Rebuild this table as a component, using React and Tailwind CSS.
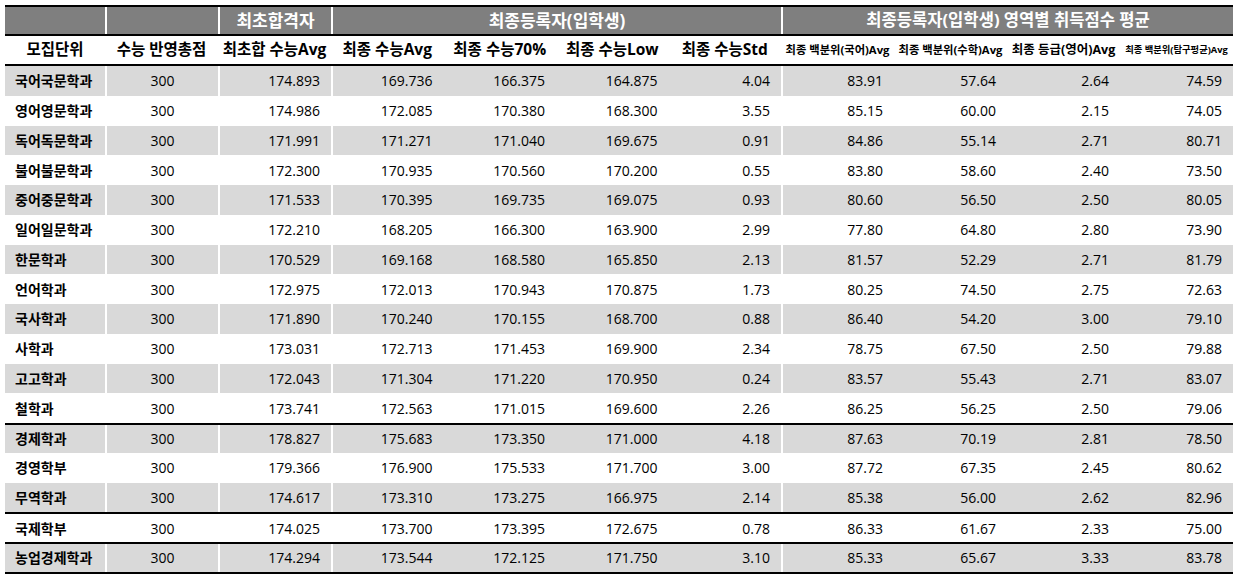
import React from "react";

const rows = [
  ["국어국문학과", "300", "174.893", "169.736", "166.375", "164.875", "4.04", "83.91", "57.64", "2.64", "74.59"],
  ["영어영문학과", "300", "174.986", "172.085", "170.380", "168.300", "3.55", "85.15", "60.00", "2.15", "74.05"],
  ["독어독문학과", "300", "171.991", "171.271", "171.040", "169.675", "0.91", "84.86", "55.14", "2.71", "80.71"],
  ["불어불문학과", "300", "172.300", "170.935", "170.560", "170.200", "0.55", "83.80", "58.60", "2.40", "73.50"],
  ["중어중문학과", "300", "171.533", "170.395", "169.735", "169.075", "0.93", "80.60", "56.50", "2.50", "80.05"],
  ["일어일문학과", "300", "172.210", "168.205", "166.300", "163.900", "2.99", "77.80", "64.80", "2.80", "73.90"],
  ["한문학과", "300", "170.529", "169.168", "168.580", "165.850", "2.13", "81.57", "52.29", "2.71", "81.79"],
  ["언어학과", "300", "172.975", "172.013", "170.943", "170.875", "1.73", "80.25", "74.50", "2.75", "72.63"],
  ["국사학과", "300", "171.890", "170.240", "170.155", "168.700", "0.88", "86.40", "54.20", "3.00", "79.10"],
  ["사학과", "300", "173.031", "172.713", "171.453", "169.900", "2.34", "78.75", "67.50", "2.50", "79.88"],
  ["고고학과", "300", "172.043", "171.304", "171.220", "170.950", "0.24", "83.57", "55.43", "2.71", "83.07"],
  ["철학과", "300", "173.741", "172.563", "171.015", "169.600", "2.26", "86.25", "56.25", "2.50", "79.06"],
  ["경제학과", "300", "178.827", "175.683", "173.350", "171.000", "4.18", "87.63", "70.19", "2.81", "78.50"],
  ["경영학부", "300", "179.366", "176.900", "175.533", "171.700", "3.00", "87.72", "67.35", "2.45", "80.62"],
  ["무역학과", "300", "174.617", "173.310", "173.275", "166.975", "2.14", "85.38", "56.00", "2.62", "82.96"],
  ["국제학부", "300", "174.025", "173.700", "173.395", "172.675", "0.78", "86.33", "61.67", "2.33", "75.00"],
  ["농업경제학과", "300", "174.294", "173.544", "172.125", "171.750", "3.10", "85.33", "65.67", "3.33", "83.78"],
];

const groupStart = [12, 15, 16];

const widths = [
  "w-[100px]",
  "w-[113px]",
  "w-[113px]",
  "w-[112.5px]",
  "w-[112.5px]",
  "w-[112.5px]",
  "w-[112.5px]",
  "w-[113px]",
  "w-[113px]",
  "w-[113px]",
  "w-[113px]",
];

const seps = ["", "border-l-2 border-white", "border-l-2 border-white", "border-l-2 border-white", "", "", "", "border-l-2 border-white", "", "", ""];

const headers = [
  { t: "모집단위", c: "text-[15.5px]" },
  { t: "수능 반영총점", c: "text-[15.5px]" },
  { t: "최초합 수능Avg", c: "text-[15.5px]" },
  { t: "최종 수능Avg", c: "text-[15.5px]" },
  { t: "최종 수능70%", c: "text-[15.5px]" },
  { t: "최종 수능Low", c: "text-[15.5px]" },
  { t: "최종 수능Std", c: "text-[15.5px]" },
  { t: "최종 백분위(국어)Avg", c: "text-[11.3px]" },
  { t: "최종 백분위(수학)Avg", c: "text-[11.3px]" },
  { t: "최종 등급(영어)Avg", c: "text-[12.5px]" },
  { t: "최종 백분위(탐구평균)Avg", c: "text-[9.3px]" },
];

function DataCell({ i, v }) {
  let align = "justify-end pr-[11px]";
  if (i === 0) align = "justify-start pl-[10px] font-bold";
  if (i === 1) align = "justify-center";
  return (
    <div className={`${widths[i]} ${seps[i]} ${align} flex h-full items-center shrink-0`}>
      {v}
    </div>
  );
}

export default function App() {
  return (
    <div className="w-[1239px] h-[576px] bg-white pt-[5px] pl-[5px] font-['Open_Sans','Noto_Sans_CJK_KR',sans-serif] text-black">
      <div className="w-[1228px] border-t-2 border-black">
        <div className="flex h-[29px] bg-[#7f7f7f] text-white font-bold text-[17px] border-b-2 border-black">
          <div className="w-[100px] shrink-0"></div>
          <div className="w-[113px] shrink-0 border-l-2 border-white"></div>
          <div className="w-[113px] shrink-0 border-l-2 border-white flex items-center justify-center">최초합격자</div>
          <div className="w-[450px] shrink-0 border-l-2 border-white flex items-center justify-center">최종등록자(입학생)</div>
          <div className="w-[452px] shrink-0 border-l-2 border-white flex items-center justify-center text-[16.6px]">최종등록자(입학생) 영역별 취득점수 평균</div>
        </div>
        <div className="flex h-[30px] border-b-2 border-black font-bold">
          {headers.map((h, i) => (
            <div key={i} className={`${widths[i]} ${h.c} shrink-0 flex items-center justify-center whitespace-nowrap`}>
              {h.t}
            </div>
          ))}
        </div>
        <div className="border-b-2 border-black text-[14px]">
          {rows.map((r, ri) => (
            <div
              key={ri}
              className={`flex h-[29.75px] ${ri % 2 === 0 ? "bg-[#d9d9d9]" : "bg-white"} ${groupStart.includes(ri) ? "border-t-2 border-black" : ""}`}
            >
              {r.map((v, i) => (
                <DataCell key={i} i={i} v={v} />
              ))}
            </div>
          ))}
        </div>
      </div>
    </div>
  );
}
